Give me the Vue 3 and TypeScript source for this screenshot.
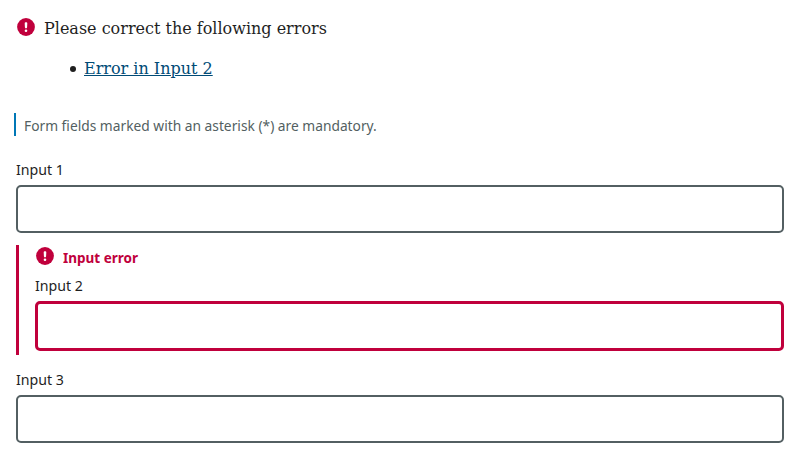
<script setup lang="ts">
interface Field {
  id: string
  label: string
  error?: string
}

const fields: Field[] = [
  { id: 'input-1', label: 'Input 1' },
  { id: 'input-2', label: 'Input 2', error: 'Input error' },
  { id: 'input-3', label: 'Input 3' },
]
</script>

<template>
  <form class="form">
    <div class="summary">
      <svg class="icon" viewBox="0 0 18 18" aria-hidden="true">
        <circle cx="9" cy="9" r="8.9" fill="#c0003c" />
        <path d="M7.7 5.3a1 1 0 0 1 1-1h.6a1 1 0 0 1 1 1l-.2 4a1.1 1.1 0 0 1-2.2 0z" fill="#fff" />
        <circle cx="9" cy="12.8" r="1.3" fill="#fff" />
      </svg>
      <span class="title">Please correct the following errors</span>
    </div>
    <ul class="errors">
      <li><a href="#input-2">Error in Input 2</a></li>
    </ul>
    <p class="hint"><span>Form fields marked with an asterisk (*) are mandatory.</span></p>
    <div v-for="field in fields" :key="field.id" class="field" :class="{ invalid: field.error }">
      <div v-if="field.error" class="message">
        <svg class="icon" viewBox="0 0 18 18" aria-hidden="true">
          <circle cx="9" cy="9" r="8.9" fill="#c0003c" />
          <path d="M7.7 5.3a1 1 0 0 1 1-1h.6a1 1 0 0 1 1 1l-.2 4a1.1 1.1 0 0 1-2.2 0z" fill="#fff" />
          <circle cx="9" cy="12.8" r="1.3" fill="#fff" />
        </svg>
        <span>{{ field.error }}</span>
      </div>
      <label :for="field.id"><span>{{ field.label }}</span></label>
      <input :id="field.id" type="text" />
    </div>
  </form>
</template>

<style scoped>
.form {
  box-sizing: border-box;
  height: 463px;
  padding: 16px;
  font-family: "Noto Sans", sans-serif;
  font-size: 15px;
  color: #1f1f1f;
}
.icon {
  display: block;
  width: 18px;
  height: 18px;
  flex: none;
}
.summary {
  display: flex;
  gap: 9px;
  height: 24px;
  padding: 2px 0 0 1px;
  box-sizing: border-box;
  font: 16px/20px "DejaVu Serif", serif;
}
.title {
  padding-top: 1px;
}
.errors {
  margin: 17px 0 0;
  padding-left: 54px;
  list-style: none;
  font: 16px/24px "DejaVu Serif", serif;
}
.errors li {
  display: flex;
  align-items: center;
  gap: 8px;
}
.errors li::before {
  content: "";
  width: 6px;
  height: 6px;
  border-radius: 50%;
  background: #1f1f1f;
}
.errors a {
  color: #004b76;
}
.hint {
  margin: 32px 0 0 -2px;
  padding-left: 8px;
  border-left: 2px solid #0077b6;
  height: 23px;
  line-height: 25px;
  color: #535f62;
}
.hint span,
.message span,
label span {
  display: inline-block;
  transform-origin: left;
  white-space: nowrap;
}
.hint span {
  transform: scaleX(0.918);
}
label span {
  transform: scaleX(0.945);
}
.message span {
  transform: scaleX(0.9);
}
.field {
  padding-top: 22px;
}
label {
  display: block;
  height: 24px;
  line-height: 22px;
  margin-bottom: 3px;
}
input {
  display: block;
  box-sizing: border-box;
  width: 100%;
  height: 48px;
  border: 2px solid #535f62;
  border-radius: 5px;
  background: #fff;
}
.invalid {
  margin-top: 12px;
  height: 110px;
  box-sizing: border-box;
  padding: 2px 0 0 16px;
  border-left: 3px solid #c0003c;
}
.invalid input {
  height: 50px;
  border: 3px solid #c0003c;
}
.message {
  display: flex;
  gap: 9px;
  height: 27px;
  padding-left: 1px;
  line-height: 20px;
  font-weight: 700;
  color: #c0003c;
}
.invalid + .field {
  padding-top: 13px;
}
</style>

<style>
body {
  background: #fff;
}
</style>
